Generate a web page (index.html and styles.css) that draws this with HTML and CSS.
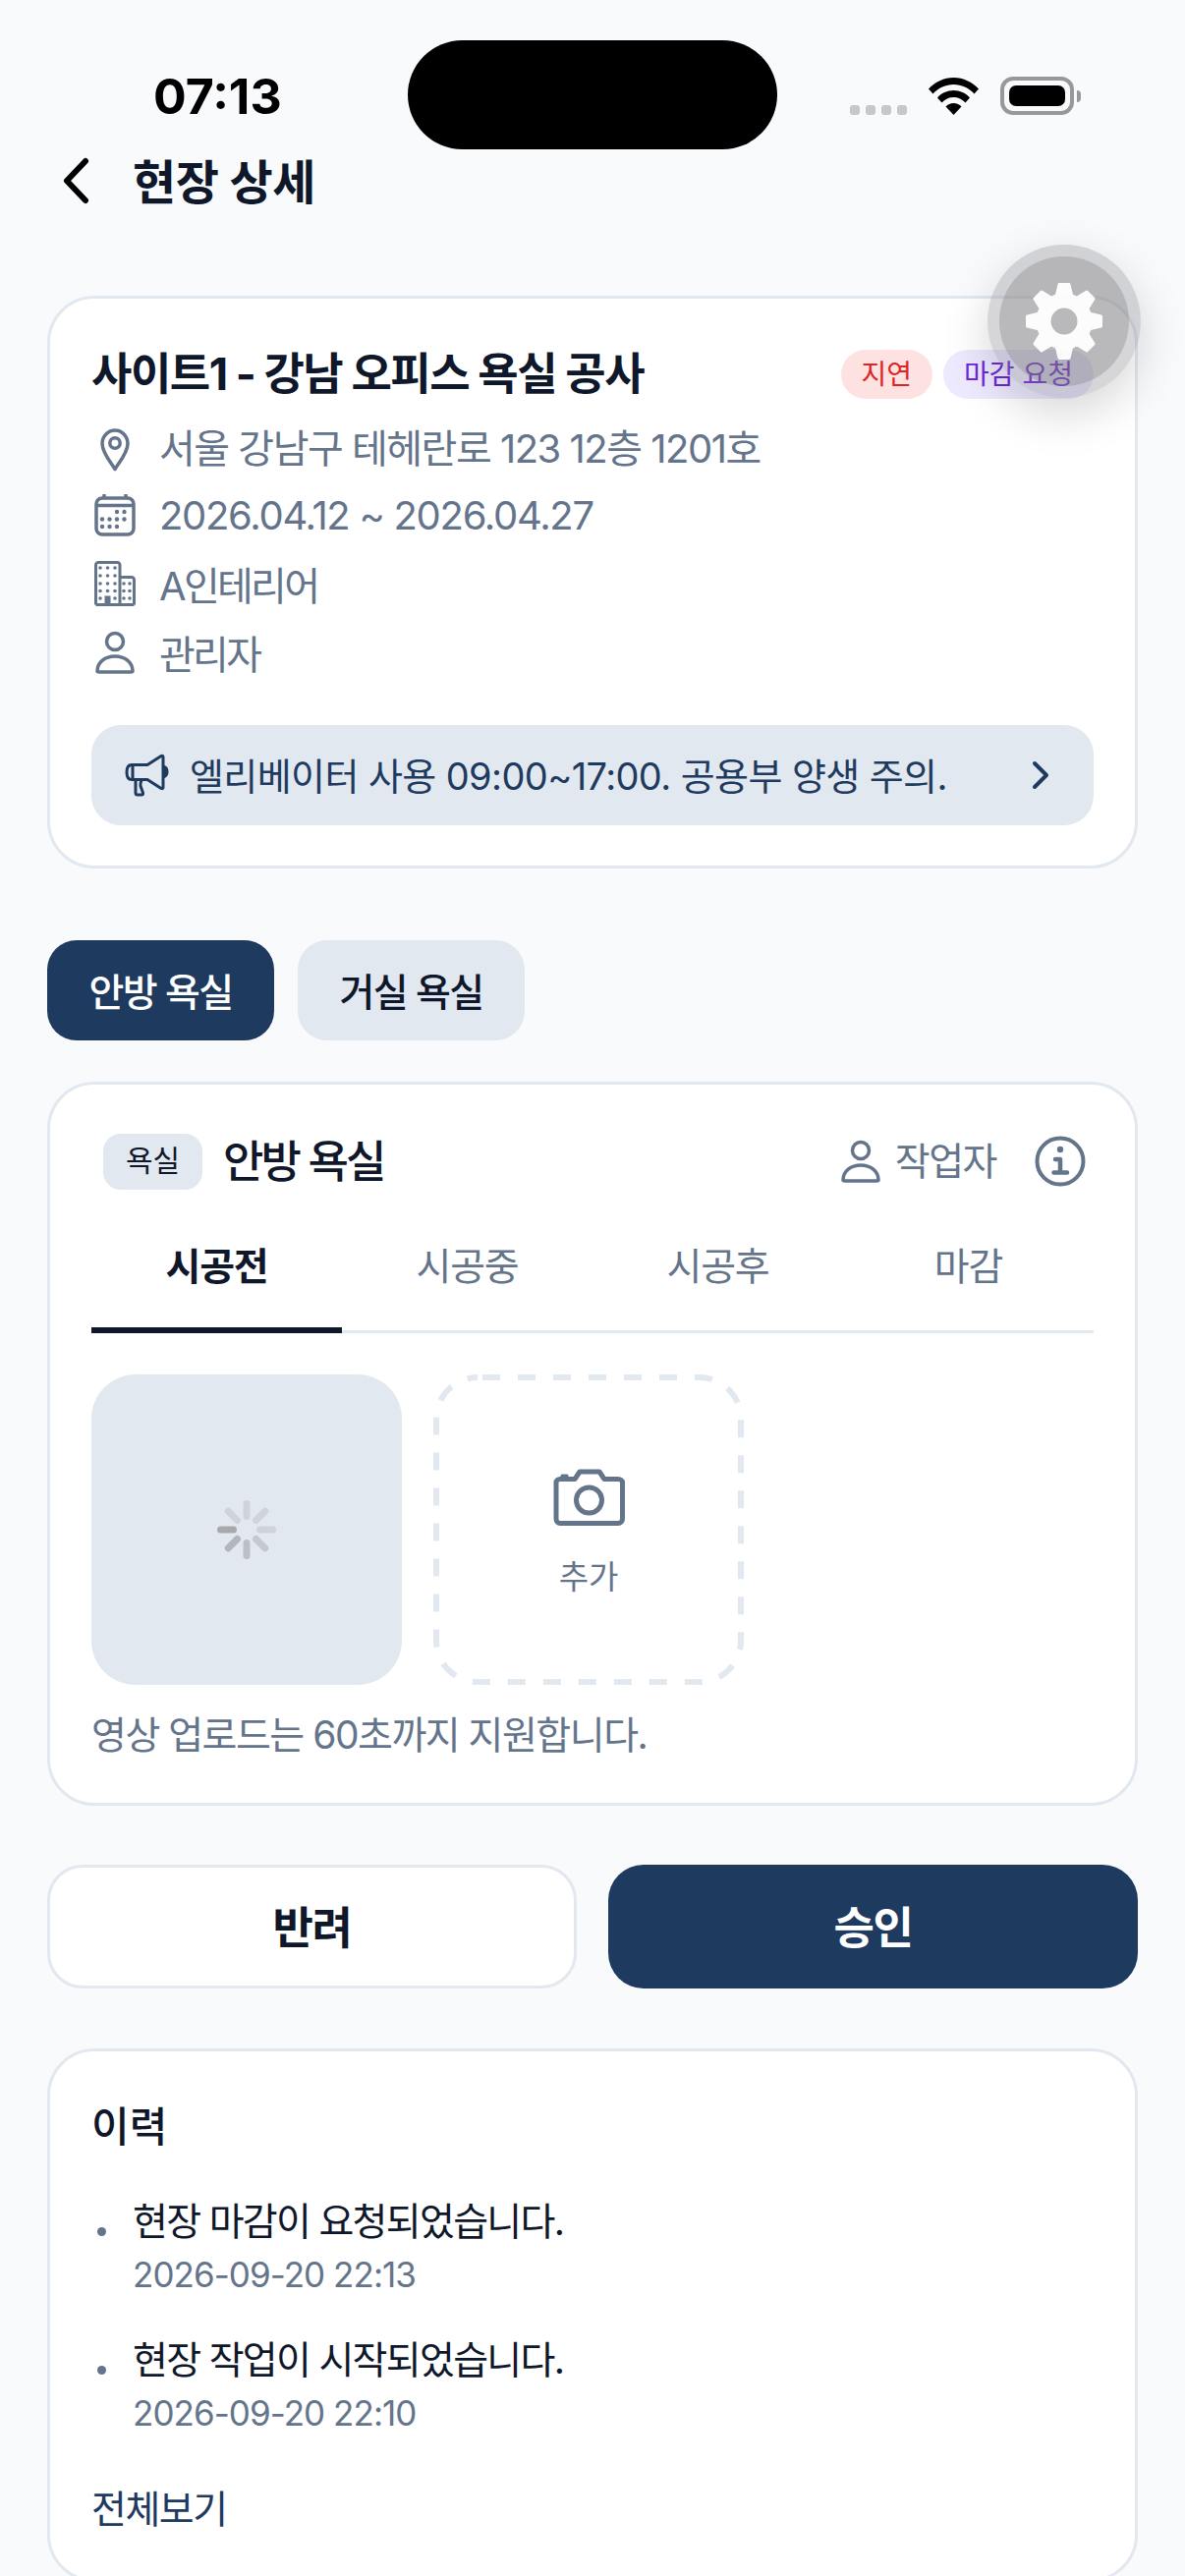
FILE: index.html
```html
<!DOCTYPE html>
<html lang="ko">
<head>
    <meta charset="UTF-8">
    <title>현장 상세</title>
    <link rel="stylesheet" href="styles.css">
</head>
<body>
    <div class="screen">
        <div class="status-bar">
            <span class="time">07:13</span>
            <div class="island"></div>
            <div class="status-icons">
                <div class="signal"><i></i><i></i><i></i><i></i></div>
                <svg class="wifi" width="51" height="38" viewBox="0 0 51 38">
                    <path d="M0 11.5C6.5 4.5 15.5 0 25.5 0S44.5 4.500 51 11.500L46.500 16.500C41 10.500 33.500 7 25.500 7S10 10.500 4.500 16.500Z"/>
                    <path d="M9 20.500C13 15.800 19 13 25.500 13S38 15.800 42 20.500L37.500 25.500C34.500 22 30.200 20 25.500 20S16.500 22 13.500 25.500Z"/>
                    <path d="M17.500 29.500C19.500 27.500 22.300 26 25.500 26S31.500 27.500 33.500 29.500L25.500 38Z"/>
                </svg>
                <div class="battery"><div class="battery-fill"></div></div>
                <div class="battery-cap"></div>
            </div>
        </div>

        <div class="top-bar">
            <svg class="back" width="28" height="48" viewBox="0 0 28 48" fill="none"><path d="M24 4L5 24L24 44" stroke="#000" stroke-width="6" stroke-linecap="round" stroke-linejoin="round"/></svg>
            <h1>현장 상세</h1>
        </div>

        <section class="card site-card">
            <div class="site-head">
                <h2>사이트1 - 강남 오피스 욕실 공사</h2>
                <div class="badges">
                    <span class="badge badge-red">지연</span>
                    <span class="badge badge-purple">마감 요청</span>
                </div>
            </div>
            <div class="info-row">
                <div class="row-icon row-icon-pin"><svg width="32" height="44" viewBox="0 0 32 44" fill="none" stroke="#64748b" stroke-width="3.500"><path d="M16 41.500C12 35 3 25 3 15.500C3 8 9 2 16 2S29 8 29 15.500C29 25 20 35 16 41.500Z" stroke-linejoin="round"/><circle cx="16" cy="15" r="5.200"/></svg></div>
                <span class="row-text row-address">서울 강남구 테헤란로 123 12층 1201호</span>
            </div>
            <div class="info-row">
                <div class="row-icon"><svg width="44" height="44" viewBox="0 0 44 44" fill="none" stroke="#64748b" stroke-width="3.500"><rect x="3" y="5" width="38" height="37" rx="6"/><path d="M3 12.500H41M11 1V6M33 1V6"/><g fill="#64748b" stroke="none"><circle cx="24" cy="19" r="2.200"/><circle cx="31.500" cy="19" r="2.200"/><circle cx="9" cy="26.500" r="2.200"/><circle cx="16.500" cy="26.500" r="2.200"/><circle cx="24" cy="26.500" r="2.200"/><circle cx="31.500" cy="26.500" r="2.200"/><circle cx="9" cy="34" r="2.200"/><circle cx="16.500" cy="34" r="2.200"/><circle cx="24" cy="34" r="2.200"/></g></svg></div>
                <span class="row-text">2026.04.12 ~ 2026.04.27</span>
            </div>
            <div class="info-row">
                <div class="row-icon"><svg width="42" height="46" viewBox="0 0 42 46" fill="none" stroke="#64748b" stroke-width="3"><path d="M1.500 44.500V4A2.500 2.500 0 0 1 4 1.500H23.500A2.500 2.500 0 0 1 26 4V44.500M26 16.500H38A2.500 2.500 0 0 1 40.500 19V44.500M1.500 44.500H40.500M12 44V37H15V44"/><g fill="#64748b" stroke="none"><circle cx="6" cy="7" r="1.800"/><circle cx="13.500" cy="7" r="1.800"/><circle cx="21" cy="7" r="1.800"/><circle cx="6" cy="15" r="1.800"/><circle cx="13.500" cy="15" r="1.800"/><circle cx="21" cy="15" r="1.800"/><circle cx="6" cy="23" r="1.800"/><circle cx="13.500" cy="23" r="1.800"/><circle cx="21" cy="23" r="1.800"/><circle cx="6" cy="30.500" r="1.800"/><circle cx="13.500" cy="30.500" r="1.800"/><circle cx="21" cy="30.500" r="1.800"/><circle cx="6" cy="38" r="1.800"/><circle cx="21" cy="38" r="1.800"/><circle cx="30" cy="23" r="1.800"/><circle cx="36" cy="23" r="1.800"/><circle cx="30" cy="30.500" r="1.800"/><circle cx="36" cy="30.500" r="1.800"/><circle cx="30" cy="38" r="1.800"/><circle cx="36" cy="38" r="1.800"/></g></svg></div>
                <span class="row-text row-name">A인테리어</span>
            </div>
            <div class="info-row">
                <div class="row-icon"><svg width="42" height="44" viewBox="0 0 42 44" fill="none" stroke="#64748b" stroke-width="3.500"><circle cx="21" cy="11" r="8.500"/><path d="M3 41C3 32 11 26 21 26S39 32 39 41C39 42 38 42 37 42H5C4 42 3 42 3 41Z"/></svg></div>
                <span class="row-text row-name">관리자</span>
            </div>
            <div class="notice">
                <svg width="46" height="46" viewBox="0 0 46 46" fill="none" stroke="#1e3a5f" stroke-width="3" stroke-linejoin="round"><path d="M24 12.500L38 3.500Q40 2.500 40 5V35Q40 37.500 38 36.500L24 27.500H8C4 27.500 3 24 3 20S4 12.500 8 12.500ZM9 13V27M12 28V41Q12 43 14 43H18Q20 43 19.500 41L17 34Q16.500 32 18 28"/><path d="M41 14.500C45 16 45 23 41 24.500Z" fill="#1e3a5f"/></svg>
                <span class="notice-text">엘리베이터 사용 09:00~17:00. 공용부 양생 주의.</span>
                <svg width="20" height="30" viewBox="0 0 20 30" fill="none"><path d="M4 3L16 15L4 27" stroke="#1e3a5f" stroke-width="4" stroke-linecap="round" stroke-linejoin="round"/></svg>
            </div>
        </section>

        <div class="room-tabs">
            <button class="room-tab active">안방 욕실</button>
            <button class="room-tab">거실 욕실</button>
        </div>

        <section class="card room-card">
            <div class="room-head">
                <span class="room-tag">욕실</span>
                <h3>안방 욕실</h3>
                <div class="room-worker">
                    <svg width="42" height="44" viewBox="0 0 42 44" fill="none" stroke="#64748b" stroke-width="3.500"><circle cx="21" cy="11" r="8.500"/><path d="M3 41C3 32 11 26 21 26S39 32 39 41C39 42 38 42 37 42H5C4 42 3 42 3 41Z"/></svg>
                    <span>작업자</span>
                </div>
                <svg class="info-icon" width="52" height="52" viewBox="0 0 52 52" fill="none" stroke="#64748b" stroke-width="4"><circle cx="26" cy="26" r="23.500"/><path d="M21 24H26V37.500M19.500 37.500H33" stroke-width="4.500" stroke-linecap="round" stroke-linejoin="round"/><circle cx="26" cy="14" r="3.200" fill="#64748b" stroke="none"/></svg>
            </div>
            <div class="step-tabs">
                <div class="step active">시공전</div>
                <div class="step">시공중</div>
                <div class="step">시공후</div>
                <div class="step">마감</div>
            </div>
            <div class="tiles">
                <div class="tile tile-loading">
                    <svg width="60" height="60" viewBox="0 0 60 60" stroke-width="7" stroke-linecap="round">
                        <path d="M30 3.500V16.500" stroke="#d0d3d9"/>
                        <path d="M48.700 11.300L39.500 20.500" stroke="#d0d3d9"/>
                        <path d="M56.500 30H43.500" stroke="#d0d2d8"/>
                        <path d="M48.700 48.700L39.500 39.500" stroke="#c5c8cd"/>
                        <path d="M30 56.500V43.500" stroke="#bcbfc3"/>
                        <path d="M11.300 48.700L20.500 39.500" stroke="#b4b6ba"/>
                        <path d="M3.500 30H16.500" stroke="#a8a9ab"/>
                        <path d="M11.300 11.300L20.500 20.500" stroke="#d0d3d9"/>
                    </svg>
                </div>
                <div class="tile tile-add">
                    <svg class="tile-dash" width="316" height="316" viewBox="0 0 316 316" fill="none"><rect x="3" y="3" width="310" height="310" rx="42" stroke="#e2e8f0" stroke-width="6" stroke-dasharray="18 18" stroke-dashoffset="-5"/></svg>
                    <svg width="73" height="58" viewBox="0 0 73 58" fill="none" stroke="#64748b" stroke-width="5" stroke-linejoin="round"><path d="M3 14C3 12 5 10.500 7 10.500H22L27 3H47L52 10.500H66C68.500 10.500 70.500 12 70.500 14V51C70.500 53.500 68.500 55.500 66 55.500H7C5 55.500 3 53.500 3 51Z"/><circle cx="36.500" cy="32" r="13"/><path d="M9 8V7H14V8" stroke-width="3"/></svg>
                    <span>추가</span>
                </div>
            </div>
            <p class="note">영상 업로드는 60초까지 지원합니다.</p>
        </section>

        <div class="actions">
            <button class="action action-reject">반려</button>
            <button class="action action-approve">승인</button>
        </div>

        <section class="card history-card">
            <h4>이력</h4>
            <ul class="history">
                <li>
                    <p class="history-text">현장 마감이 요청되었습니다.</p>
                    <p class="history-date">2026-09-20 22:13</p>
                </li>
                <li>
                    <p class="history-text">현장 작업이 시작되었습니다.</p>
                    <p class="history-date">2026-09-20 22:10</p>
                </li>
            </ul>
            <a class="more">전체보기</a>
        </section>

        <div class="fab">
            <div class="fab-inner">
                <svg class="gear" width="78" height="78" viewBox="0 0 78 78">
                    <circle cx="39" cy="39" r="21" fill="none" stroke="#fff" stroke-width="15"/>
                    <g fill="#fff" stroke="#fff" stroke-width="3" stroke-linejoin="round">
                        <polygon points="31,14 47,14 44,1.500 34,1.500"/>
                        <polygon points="31,14 47,14 44,1.500 34,1.500" transform="rotate(45 39 39)"/>
                        <polygon points="31,14 47,14 44,1.500 34,1.500" transform="rotate(90 39 39)"/>
                        <polygon points="31,14 47,14 44,1.500 34,1.500" transform="rotate(135 39 39)"/>
                        <polygon points="31,14 47,14 44,1.500 34,1.500" transform="rotate(180 39 39)"/>
                        <polygon points="31,14 47,14 44,1.500 34,1.500" transform="rotate(225 39 39)"/>
                        <polygon points="31,14 47,14 44,1.500 34,1.500" transform="rotate(270 39 39)"/>
                        <polygon points="31,14 47,14 44,1.500 34,1.500" transform="rotate(315 39 39)"/>
                    </g>
                </svg>
            </div>
        </div>
    </div>
</body>
</html>
```

FILE: styles.css
```css
* {
    box-sizing: border-box;
}

html, body {
    margin: 0;
    padding: 0;
}

body {
    background-color: #f8fafc;
    font-family: Inter, "Noto Sans CJK KR", sans-serif;
    color: #0f172a;
}

.screen {
    position: relative;
    width: 1206px;
    height: 2622px;
    padding: 0 48px;
    overflow: hidden;
}

h1, h2, h3, h4, p, ul {
    margin: 0;
    padding: 0;
}

button {
    font-family: inherit;
    border: none;
}

/* status bar */
.status-bar {
    display: flex;
    justify-content: space-between;
    height: 152px;
    padding-top: 41px;
}

.time {
    width: 367px;
    padding: 27px 0 0 108px;
    font-size: 50px;
    line-height: 60px;
    font-weight: 700;
    color: #000;
}

.island {
    width: 376px;
    height: 111px;
    border-radius: 56px;
    background-color: #000;
}

.status-icons {
    display: flex;
    align-items: flex-end;
    width: 367px;
    height: 76px;
    padding-left: 74px;
}

.signal {
    display: flex;
    gap: 6px;
}

.signal i {
    width: 10px;
    height: 10px;
    border-radius: 3px;
    background-color: #c7c7cc;
}

.wifi {
    margin-left: 22px;
}

.battery {
    width: 75px;
    height: 39px;
    margin-left: 22px;
    padding: 5px;
    border: 4px solid #98989c;
    border-radius: 13px;
}

.battery-fill {
    width: 100%;
    height: 100%;
    border-radius: 7px;
    background-color: #000;
}

.battery-cap {
    width: 4px;
    height: 12px;
    margin: 0 0 13px 3px;
    border-radius: 0 4px 4px 0;
    background-color: #98989c;
}

/* header */
.top-bar {
    display: flex;
    align-items: center;
    gap: 44px;
    height: 60px;
    margin-top: 2px;
    padding-left: 15px;
}

.top-bar h1 {
    padding-bottom: 4px;
    font-size: 48px;
    font-weight: 700;
    letter-spacing: -0.4px;
    color: #0f172a;
}

/* cards */
.card {
    border: 3px solid #e2e8f0;
    border-radius: 48px;
    background-color: #fff;
}

.site-card {
    height: 583px;
    margin-top: 87px;
    padding: 42px 42px 0;
}

.site-head {
    display: flex;
    justify-content: space-between;
    align-items: center;
    height: 70px;
    margin-bottom: 3px;
}

.site-head h2 {
    padding-bottom: 8px;
    font-size: 45px;
    font-weight: 700;
    letter-spacing: -1.5px;
}

.badges {
    display: flex;
    gap: 11px;
}

.badge {
    height: 50px;
    padding: 0 21px;
    border-radius: 25px;
    font-size: 28px;
    line-height: 50px;
}

.badge-red {
    background-color: #fee2e2;
    color: #dc2626;
}

.badge-purple {
    background-color: #ede9fe;
    color: #6d28d9;
}

.info-row {
    display: flex;
    align-items: center;
    height: 70px;
    font-size: 40px;
    letter-spacing: -1.3px;
    color: #64748b;
}

.row-address {
    letter-spacing: -1.5px;
}

.row-name {
    letter-spacing: -2.7px;
}

.row-icon {
    display: flex;
    justify-content: center;
    flex: none;
    width: 44px;
    margin: 0 23px 0 2px;
}

.row-icon-pin {
    margin-top: 8px;
}

.notice {
    display: flex;
    align-items: center;
    height: 102px;
    margin-top: 39px;
    padding: 0 44px 0 33px;
    border-radius: 30px;
    background-color: #e2e8f0;
    font-size: 38px;
    letter-spacing: -0.6px;
    color: #1e3a5f;
}

.notice-text {
    flex: 1;
    margin-left: 21px;
    padding-bottom: 4px;
}

/* room tabs */
.room-tabs {
    display: flex;
    gap: 24px;
    margin-top: 73px;
}

.room-tab {
    width: 231px;
    height: 102px;
    padding-bottom: 4px;
    border-radius: 30px;
    background-color: #e2e8f0;
    font-size: 39px;
    font-weight: 500;
    letter-spacing: -1.6px;
    color: #0f172a;
}

.room-tab.active {
    background-color: #1e3a5f;
    color: #fff;
}

/* room card */
.room-card {
    height: 737px;
    margin-top: 42px;
    padding: 49px 42px 0;
}

.room-head {
    display: flex;
    align-items: center;
    height: 58px;
    padding-left: 12px;
}

.room-tag {
    width: 101px;
    height: 57px;
    border-radius: 18px;
    background-color: #e2e8f0;
    font-size: 30px;
    line-height: 55px;
    text-align: center;
}

.room-head h3 {
    flex: 1;
    margin-left: 21px;
    padding-bottom: 6px;
    font-size: 45px;
    font-weight: 500;
    letter-spacing: -2.8px;
}

.room-worker {
    display: flex;
    align-items: center;
    gap: 14px;
    font-size: 39px;
    letter-spacing: -1.5px;
    color: #64748b;
}

.room-worker span {
    padding-bottom: 6px;
}

.info-icon {
    margin-left: 39px;
    margin-right: 8px;
}

.step-tabs {
    display: grid;
    grid-template-columns: repeat(4, 1fr);
    height: 140px;
    margin-top: 6px;
    border-bottom: 3px solid #e2e8f0;
}

.step {
    height: 140px;
    padding-top: 48px;
    font-size: 39px;
    line-height: 48px;
    letter-spacing: -1.2px;
    text-align: center;
    color: #64748b;
}

.step.active {
    border-bottom: 6px solid #0f172a;
    font-weight: 700;
    color: #0f172a;
}

.tiles {
    display: flex;
    gap: 32px;
    margin-top: 42px;
}

.tile {
    width: 316px;
    height: 316px;
    border-radius: 45px;
}

.tile-loading {
    display: flex;
    align-items: center;
    justify-content: center;
    background-color: #e2e8f0;
}

.tile-add {
    position: relative;
    display: flex;
    flex-direction: column;
    align-items: center;
    justify-content: center;
    gap: 26px;
    padding-top: 8px;
    font-size: 33px;
    color: #64748b;
}

.tile-dash {
    position: absolute;
    left: 0;
    top: 0;
}

.note {
    margin-top: 26px;
    font-size: 39px;
    line-height: 50px;
    letter-spacing: -1.5px;
    color: #64748b;
}

/* action buttons */
.actions {
    display: flex;
    gap: 32px;
    margin-top: 60px;
}

.action {
    flex: none;
    width: 539px;
    height: 126px;
    padding-bottom: 4px;
    border-radius: 36px;
    font-size: 45px;
    font-weight: 700;
    letter-spacing: -1.5px;
}

.action-reject {
    border: 3px solid #e2e8f0;
    background-color: #fff;
    color: #0f172a;
}

.action-approve {
    background-color: #1e3a5f;
    color: #fff;
}

/* history */
.history-card {
    height: 543px;
    margin-top: 61px;
    padding: 47px 42px 0;
}

.history-card h4 {
    font-size: 42px;
    line-height: 60px;
    font-weight: 500;
}

.history {
    list-style: none;
    margin-top: 40px;
}

.history li {
    position: relative;
    height: 141px;
    padding-left: 42px;
}

.history li::before {
    content: "";
    position: absolute;
    left: 6px;
    top: 32px;
    width: 9px;
    height: 9px;
    border-radius: 50%;
    background-color: #64748b;
}

.history-text {
    font-size: 39px;
    line-height: 52px;
    letter-spacing: -1.7px;
}

.history-date {
    margin-top: 2px;
    font-size: 35px;
    line-height: 52px;
    letter-spacing: -0.95px;
    color: #64748b;
}

.more {
    display: block;
    margin-top: 12px;
    font-size: 39px;
    line-height: 50px;
    letter-spacing: -1.5px;
    color: #1e3a5f;
}

/* floating settings button */
.fab {
    position: absolute;
    left: 1005px;
    top: 249px;
    width: 156px;
    height: 156px;
    padding: 12px;
    border-radius: 50%;
    background-color: rgba(120, 120, 125, 0.3);
    box-shadow: 0 16px 48px rgba(0, 0, 0, 0.16);
}

.fab-inner {
    display: flex;
    align-items: center;
    justify-content: center;
    width: 132px;
    height: 132px;
    border-radius: 50%;
    background-color: rgba(120, 120, 120, 0.3);
}

.gear {
    opacity: 0.96;
}
```
